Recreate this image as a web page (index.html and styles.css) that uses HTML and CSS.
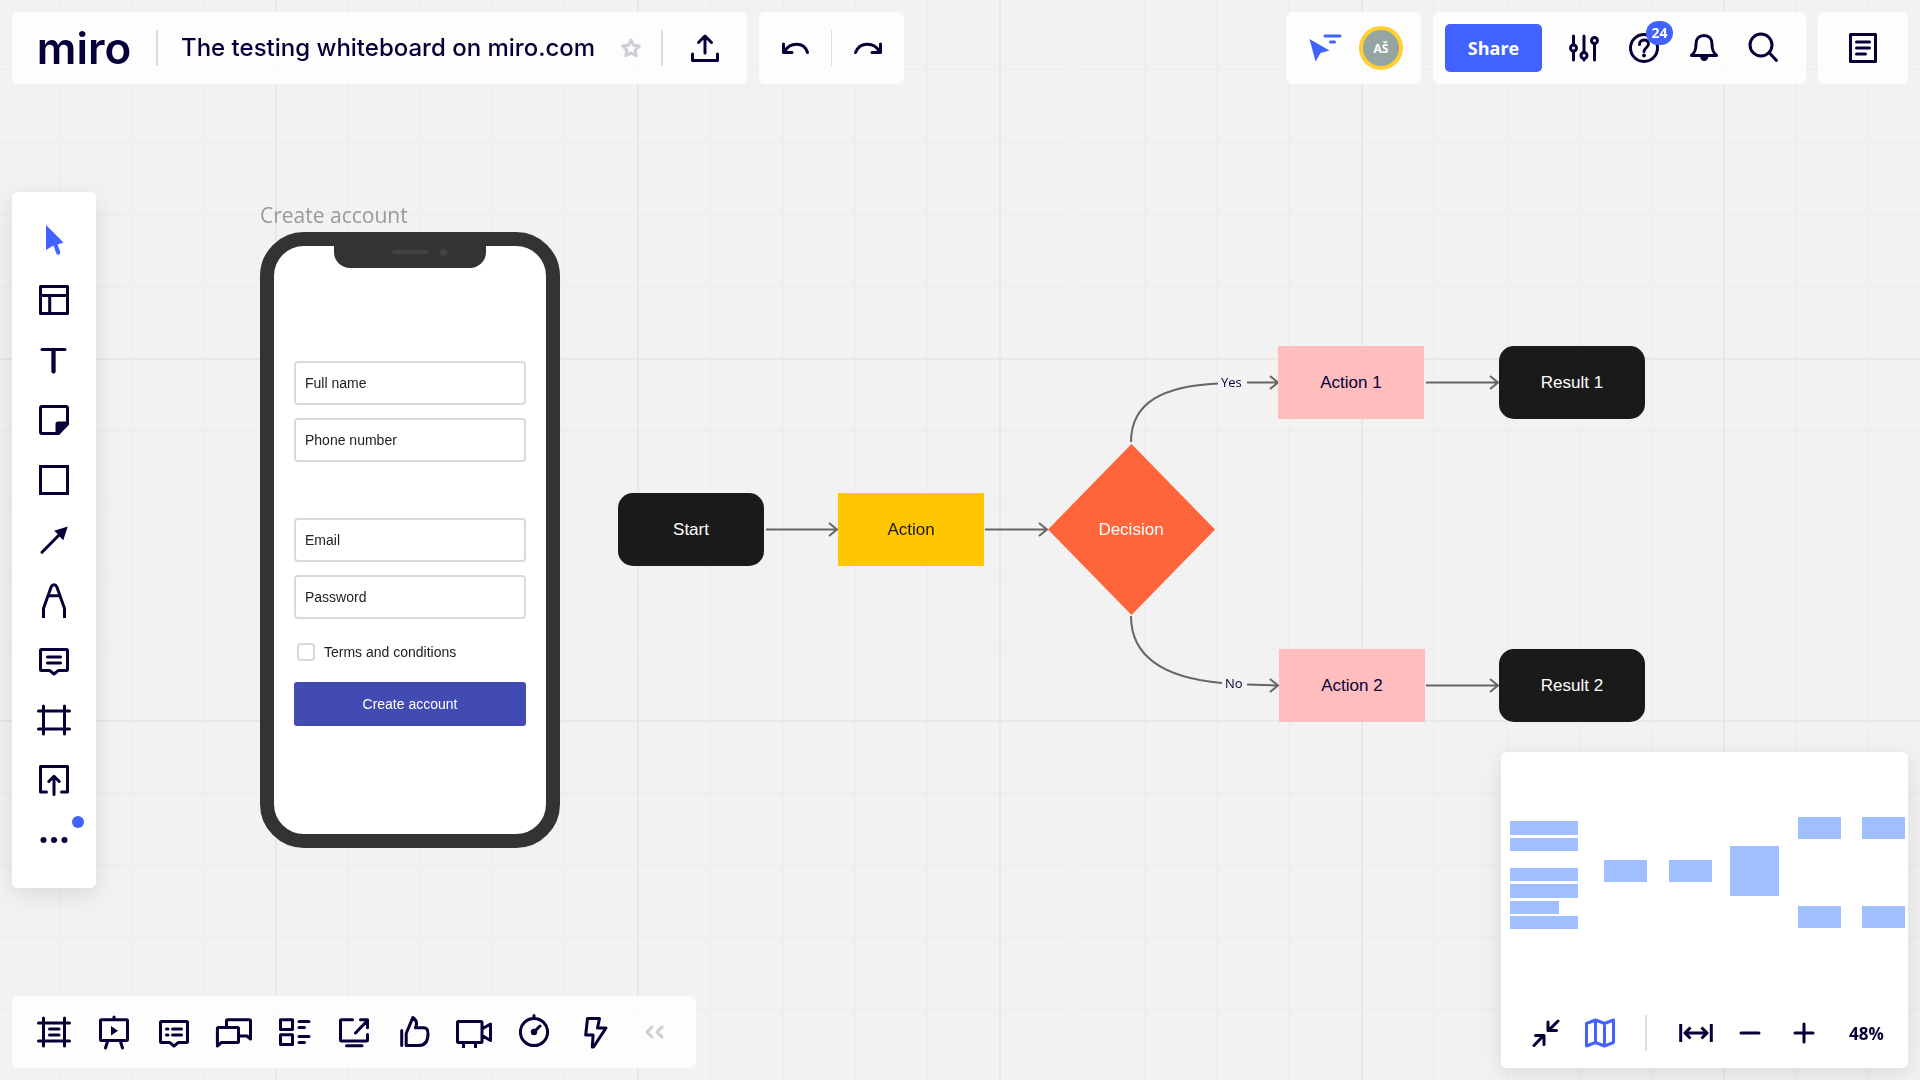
FILE: index.html
```html
<!DOCTYPE html>
<html lang="en">
<head>
<meta charset="utf-8">
<meta name="viewport" content="width=device-width, initial-scale=1">
<title>The testing whiteboard on miro.com</title>
<link rel="stylesheet" href="styles.css">
</head>
<body>
<main class="board" aria-label="Whiteboard">
  <svg class="grid-lines" aria-hidden="true">
    <defs>
      <pattern id="grid" x="275" y="-4" width="362" height="362" patternUnits="userSpaceOnUse">
        <path class="grid-minor" d="M73 0v362M146 0v362M218 0v362M290 0v362M0 73h362M0 146h362M0 218h362M0 290h362"/>
        <path class="grid-major" d="M1 0v362M0 1h362"/>
      </pattern>
    </defs>
    <rect width="100%" height="100%" fill="url(#grid)"/>
  </svg>

  <h2 class="frame-title">Create account</h2>
  <section class="phone" aria-label="Create account screen">
    <div class="notch"><span class="speaker"></span><span class="camera"></span></div>
    <form class="signup">
      <div class="field-group">
        <input class="field" type="text" placeholder="Full name" aria-label="Full name">
        <input class="field" type="tel" placeholder="Phone number" aria-label="Phone number">
      </div>
      <div class="field-group">
        <input class="field" type="email" placeholder="Email" aria-label="Email">
        <input class="field" type="password" placeholder="Password" aria-label="Password">
      </div>
      <label class="terms"><input class="tick" type="checkbox">Terms and conditions</label>
      <button class="create" type="button">Create account</button>
    </form>
  </section>

  <svg class="connectors" aria-hidden="true">
    <path d="M766 529.500H837M829 523l8 6.500-8 6.500M985 529.500h61M1039 523l8 6.500-8 6.500"/>
    <path d="M1131 442C1131 402 1164 386 1218 383.500M1247 382.500h30M1270 376l8 6.500-8 6.500"/>
    <path d="M1131 616C1131 658 1166 678 1222 683M1247 684.500l30 1M1270 679l8 6.500-8 6.500"/>
    <path d="M1426 382.500h71M1490 376l8 6.500-8 6.500M1426 685.500h71M1490 679l8 6.500-8 6.500"/>
    <path class="diamond" d="M1131.500 444L1215 529.500 1131.500 615 1048 529.500z"/>
  </svg>
  <div class="node dark start">Start</div>
  <div class="node yellow action">Action</div>
  <div class="node decision">Decision</div>
  <div class="node pink action-1">Action 1</div>
  <div class="node dark result-1">Result 1</div>
  <div class="node pink action-2">Action 2</div>
  <div class="node dark result-2">Result 2</div>
  <span class="branch yes">Yes</span>
  <span class="branch no">No</span>
</main>

<div class="shell">
  <header class="topbar">
    <div class="bar title-bar">
      <a class="logo" href="#">miro</a>
      <span class="divider"></span>
      <h1 class="board-name">The testing whiteboard on miro.com</h1>
      <button class="star" aria-label="Star this board"><svg class="icon" viewBox="0 0 36 36"><path d="M18 10l2.500 5.300 5.900.7-4.300 4 1.100 5.700-5.200-2.800-5.200 2.800 1.100-5.700-4.300-4 5.900-.7z"/></svg></button>
      <span class="divider"></span>
      <button class="tool" aria-label="Export"><svg class="icon" viewBox="0 0 36 36"><path d="M5.500 24v6.500h25V24M18 23V6M11.500 12.500L18 6l6.500 6.500"/></svg></button>
    </div>
    <div class="bar history-bar">
      <button class="tool" aria-label="Undo"><svg class="icon" viewBox="0 0 36 36"><path d="M6.500 14v8.500H15M7.500 21.500C13 12 27 11.500 30.500 22.500"/></svg></button>
      <span class="divider thin"></span>
      <button class="tool" aria-label="Redo"><svg class="icon" viewBox="0 0 36 36"><path d="M30.500 14v8.500H22M29.500 21.500C24 12 10 11.500 5.500 22.500"/></svg></button>
    </div>
    <div class="bar people-bar">
      <button class="cursors" aria-label="Collaborator cursors"><svg class="icon blue" viewBox="0 0 36 36"><path class="solid" d="M2.500 9L22.500 20.500 13.500 23 8.500 31.500z"/><path d="M18 6h15M23.500 12h4"/></svg></button>
      <button class="avatar" aria-label="Your profile">AŠ</button>
    </div>
    <div class="bar share-bar">
      <button class="share">Share</button>
      <button class="tool" aria-label="Settings"><svg class="icon" viewBox="0 0 36 36"><path d="M7.500 6v8.500M7.500 21.500V30M18 6v16M18 29v1M28.500 14v16"/><circle cx="7.500" cy="18" r="3"/><circle cx="18" cy="25.500" r="3"/><circle cx="28.500" cy="10.500" r="3"/></svg></button>
      <button class="tool" aria-label="Help, 24 new"><svg class="icon" viewBox="0 0 36 36"><circle cx="18" cy="18" r="13.500"/><path d="M13.500 14.500c0-6 9-6 9-.5 0 3.500-4.500 4-4.500 7.500"/><circle class="solid" cx="18" cy="25.500" r="2"/></svg><span class="count">24</span></button>
      <button class="tool" aria-label="Notifications"><svg class="icon" viewBox="0 0 36 36"><path d="M5.500 25.500C9 22.500 10 20 10 14c0-5 3-8.500 8-8.500s8 3.500 8 8.500c0 6 1 8.500 4.500 11.500z"/><path class="solid" d="M14 26.500h8.500c-.7 6-7.800 6-8.500 0z"/></svg></button>
      <button class="tool" aria-label="Search"><svg class="icon" viewBox="0 0 36 36"><circle cx="15" cy="15" r="11"/><path d="M23 22.500L30.500 30.500"/></svg></button>
    </div>
    <div class="bar notes-bar">
      <button class="tool" aria-label="Notes"><svg class="icon" viewBox="0 0 36 36"><path d="M5.500 4.500h25v27h-25zM11.500 12h13M11.500 18h13M11.500 24h9"/></svg></button>
    </div>
  </header>

  <nav class="rail" aria-label="Creation tools">
    <button class="tool" aria-label="Select"><svg class="icon blue" viewBox="0 0 36 36"><path class="fill" d="M10 3v25l7.500-4.500 2.700 7.700a2 2 0 0 0 4-1.400L21.500 22.500l6-2z"/></svg></button>
    <button class="tool" aria-label="Templates"><svg class="icon" viewBox="0 0 36 36"><path d="M4.500 4.500h27v27h-27zM4.500 13.500h27M13.700 13.500v18"/></svg></button>
    <button class="tool" aria-label="Text"><svg class="icon" viewBox="0 0 36 36"><path d="M6 7.500h23"/><path class="thick" d="M17.500 8v21.500"/></svg></button>
    <button class="tool" aria-label="Sticky note"><svg class="icon" viewBox="0 0 36 36"><path d="M6 4.500h24a1.500 1.500 0 0 1 1.500 1.500v16L22.500 31.500H6A1.500 1.500 0 0 1 4.500 30V6A1.500 1.500 0 0 1 6 4.500z"/><path class="fill" d="M22 19.500h10.500L33 22.500 22.500 33l-3-.5V22q0-2.500 2.500-2.500z"/></svg></button>
    <button class="tool" aria-label="Shape"><svg class="icon sharp" viewBox="0 0 36 36"><path d="M4.500 4.500h27v27h-27z"/></svg></button>
    <button class="tool" aria-label="Connection line"><svg class="icon" viewBox="0 0 36 36"><path d="M6 30.300L24 12"/><path class="fill" d="M31.700 4.500L27.300 18.200 23.500 14.500 21.800 12.300 18.200 8.700z"/></svg></button>
    <button class="tool" aria-label="Pen"><svg class="icon flat" viewBox="0 0 36 36"><path d="M7.500 36v-9.500L15.200 4.800Q16.200 2.700 18 2.700t2.800 2.100L28.500 26.500V36M12.500 13.700h11"/></svg></button>
    <button class="tool" aria-label="Comment"><svg class="icon" viewBox="0 0 36 36"><path d="M5.500 7.400h25q1 0 1 1v19q0 1-1 1h-8L18 32l-4.500-3.600h-8q-1 0-1-1v-19q0-1 1-1zM11.500 15h13M11.500 21h13"/></svg></button>
    <button class="tool" aria-label="Frame"><svg class="icon" viewBox="0 0 36 36"><path d="M2.500 9h31M2.500 27h31M7.500 4v28M28.500 4v28"/></svg></button>
    <button class="tool" aria-label="Upload"><svg class="icon" viewBox="0 0 36 36"><path d="M10.500 30h-6V4.500h27V30h-6M18 32.500V14.500M12.800 19.500l5.200-5.200 5.200 5.200"/></svg></button>
    <button class="tool" aria-label="More tools"><svg class="icon" viewBox="0 0 36 36"><circle class="fill" cx="7.500" cy="18" r="3"/><circle class="fill" cx="18" cy="18" r="3"/><circle class="fill" cx="28.500" cy="18" r="3"/></svg><span class="new-dot"></span></button>
  </nav>

  <nav class="bar bottom-bar" aria-label="Collaboration tools">
    <button class="tool" aria-label="Frames"><svg class="icon" viewBox="0 0 36 36"><path d="M2.500 9h31M2.500 27h31M7.500 4v28M28.500 4v28M13.500 15h9.500M13.500 21h9.500"/></svg></button>
    <button class="tool" aria-label="Presentation"><svg class="icon" viewBox="0 0 36 36"><path d="M5.500 5.700h25q1 0 1 1v18.800q0 1-1 1h-25q-1 0-1-1V6.700q0-1 1-1zM18 5V3M11.500 27.500L9.500 34M24.500 27.500l2 6.500"/><path class="fill" d="M15 12v9.500l7-4.700z"/></svg></button>
    <button class="tool" aria-label="Comments"><svg class="icon" viewBox="0 0 36 36"><path d="M5.500 7.400h25q1 0 1 1v19q0 1-1 1h-8L18 32l-4.500-3.600h-8q-1 0-1-1v-19q0-1 1-1zM10.500 15h1.500M16.500 15h9M10.500 21h1.500M16.500 21h9"/></svg></button>
    <button class="tool" aria-label="Chat"><svg class="icon flat" viewBox="0 0 36 36"><path d="M2.500 13.400h19q1 0 1 1v13q0 1-1 1H5.500L1.400 32V14.400q0-1 1.100-1zM10.500 13V6.700q0-1 1-1h22q1 0 1 1V25l-3.500-3H24"/></svg></button>
    <button class="tool" aria-label="Cards"><svg class="icon" viewBox="0 0 36 36"><path d="M4.500 5.700h12v9.800h-12zM4.500 20.700h12v9.800h-12zM23 7.500h10M23 13.500h5.500M23 22.500h10M23 28.500h5.500"/></svg></button>
    <button class="tool" aria-label="Screen sharing"><svg class="icon" viewBox="0 0 36 36"><path d="M16.500 5.700H5.500q-1 0-1 1V26q0 1 1 1h25q1 0 1-1v-5.500M10.500 31.700h15.500M19.500 19L31 7M24.500 5.700h7v8"/></svg></button>
    <button class="tool" aria-label="Voting"><svg class="icon" viewBox="0 0 36 36"><path d="M5.700 16.500v15M10.200 31.500V19.500L16.800 3.500Q22.500 7 19.500 13.800h8q4.500 0 4.500 5.700 0 12-9 12z"/></svg></button>
    <button class="tool" aria-label="Video chat"><svg class="icon flat" viewBox="0 0 36 36"><path d="M2.500 7.400H25q1 0 1 1v19q0 1-1 1H2.500q-1 0-1-1v-19q0-1 1-1zM26 15l8.500-5v16.500L26 21.500M7.500 29v5M19.500 29v5"/></svg></button>
    <button class="tool" aria-label="Timer"><svg class="icon" viewBox="0 0 36 36"><circle cx="18" cy="18" r="13.600"/><path d="M18 4V1.500M18 18l6-6"/><circle class="fill" cx="18" cy="18" r="3.200"/></svg></button>
    <button class="tool" aria-label="Apps"><svg class="icon" viewBox="0 0 36 36"><path d="M11.500 4.500h12l-2 9.500h8.500L17.500 33h-1.200l.8-12H9.700z"/></svg></button>
    <button class="tool" aria-label="Collapse toolbar"><svg class="icon faint" viewBox="0 0 36 36"><path d="M16 13l-5 5 5 5M26 13l-5 5 5 5"/></svg></button>
  </nav>

  <section class="map-panel" aria-label="Map">
    <svg class="minimap" viewBox="0 0 407 246" aria-hidden="true">
      <path d="M9 69h68v14H9zM9 86h68v13H9zM9 116h68v13H9zM9 132h68v14H9zM9 149h49v13H9zM9 164h68v13H9zM103 108h43v22h-43zM168 108h43v22h-43zM229 94h49v50h-49zM297 65h43v22h-43zM361 65h43v22h-43zM297 154h43v22h-43zM361 154h43v22h-43z"/>
    </svg>
    <div class="zoom-bar">
      <button class="zoom-tool" aria-label="Hide controls"><svg class="icon" viewBox="0 0 36 36"><path d="M6 30.500L15 21M7.500 20.500H16v9M30 6L21 15M20 7v8.500h8.500"/></svg></button>
      <button class="zoom-tool" aria-label="Toggle map"><svg class="icon blue" viewBox="0 0 36 36"><path d="M4.500 8.500L13.500 5 22.500 8.500 31.500 5v22.500L22.500 31 13.500 27.500 4.500 31zM13.500 5v22.500M22.500 8.500V31"/></svg></button>
      <span class="divider"></span>
      <button class="zoom-tool" aria-label="Fit to screen"><svg class="icon flat" viewBox="0 0 36 36"><path d="M2.700 9v18M33.300 9v18M7.500 18h21M12.500 12.500L7 18l5.500 5.500M23.500 12.500L29 18l-5.500 5.500"/></svg></button>
      <button class="zoom-tool" aria-label="Zoom out"><svg class="icon" viewBox="0 0 36 36"><path d="M9 18h18"/></svg></button>
      <button class="zoom-tool" aria-label="Zoom in"><svg class="icon" viewBox="0 0 36 36"><path d="M9 18h18M18 9v18"/></svg></button>
      <button class="zoom-level">48%</button>
    </div>
  </section>
</div>
</body>
</html>
```

FILE: styles.css
```css
*, *::before, *::after { box-sizing: border-box; }

:root {
  --ink: #050038;
  --blue: #4262ff;
  --line: #dddde3;
  --ui: "Open Sans", "Noto Sans", sans-serif;
  --shape: "Liberation Sans", Arial, sans-serif;
}

body {
  margin: 0;
  background: #f2f2f2;
  color: var(--ink);
  font-family: var(--ui);
}

button {
  margin: 0;
  padding: 0;
  border: 0;
  background: none;
  color: inherit;
  font: inherit;
  cursor: pointer;
}

/* Canvas */
.board { position: fixed; inset: 0; overflow: hidden; }
.grid-lines, .connectors { position: absolute; inset: 0; width: 100%; height: 100%; }
.grid-minor { fill: none; stroke: #eee; stroke-width: 2; }
.grid-major { fill: none; stroke: #e8e8e8; stroke-width: 2; }
.connectors path { fill: none; stroke: #666; stroke-width: 2; }
.connectors .diamond { fill: #ff653a; stroke: none; }

.frame-title {
  position: absolute;
  left: 260px;
  top: 200px;
  margin: 0;
  color: #999;
  font-size: 21px;
  font-weight: 400;
  line-height: 30px;
}

.phone {
  position: absolute;
  left: 260px;
  top: 232px;
  width: 300px;
  height: 616px;
  border: 14px solid #333;
  border-radius: 44px;
  background: #fff;
}

.notch {
  display: flex;
  align-items: center;
  justify-content: flex-end;
  gap: 12px;
  width: 152px;
  height: 24px;
  margin: -2px auto 0;
  padding: 0 39px 8px 0;
  border-radius: 0 0 16px 16px;
  background: #333;
}
.speaker { width: 36px; height: 4px; border-radius: 2px; background: #434343; }
.camera { width: 7px; height: 7px; border-radius: 50%; background: #434343; }

.signup {
  display: flex;
  flex-direction: column;
  padding: 93px 20px 0;
  font-family: var(--shape);
  font-size: 14px;
}
.field-group { display: flex; flex-direction: column; gap: 13px; }
.field-group + .field-group { margin-top: 56px; }
.field {
  width: 100%;
  height: 44px;
  padding: 0 9px;
  border: 2px solid #d9d9d9;
  border-radius: 4px;
  background: #fff;
  color: #222;
  font: inherit;
}
.field::placeholder { color: #222; opacity: 1; }
.terms {
  display: flex;
  align-items: center;
  gap: 9px;
  margin: 24px 0 21px;
  padding-left: 3px;
  color: #222;
  line-height: 18px;
}
.tick {
  appearance: none;
  width: 18px;
  height: 18px;
  margin: 0;
  border: 2px solid #d9d9d9;
  border-radius: 4px;
  background: #fff;
}
.create { height: 44px; border-radius: 3px; background: #424bb2; color: #fff; }

.node {
  position: absolute;
  display: flex;
  align-items: center;
  justify-content: center;
  width: 146px;
  height: 73px;
  font-family: var(--shape);
  font-size: 17px;
}
.dark { border-radius: 15px; background: #1a1a1a; color: #fff; }
.yellow { background: #ffc602; color: #1a1a1a; }
.pink { background: #ffbdbd; }
.start { left: 618px; top: 493px; }
.action { left: 838px; top: 493px; }
.decision { left: 1058px; top: 493px; color: #fff; }
.action-1 { left: 1278px; top: 346px; }
.result-1 { left: 1499px; top: 346px; }
.action-2 { left: 1279px; top: 649px; }
.result-2 { left: 1499px; top: 649px; }
.branch { position: absolute; font-size: 13px; line-height: 18px; }
.yes { left: 1221px; top: 373px; }
.no { left: 1225px; top: 674px; }

/* Interface over the canvas */
.shell {
  position: relative;
  display: grid;
  grid-template-columns: auto 1fr auto;
  grid-template-rows: auto 1fr auto;
  min-height: 100vh;
  padding: 12px;
}
.topbar { grid-column: 1 / -1; display: flex; gap: 12px; }
.bar {
  display: flex;
  align-items: center;
  height: 72px;
  padding: 0 12px;
  border-radius: 6px;
  background: rgba(255, 255, 255, 0.8);
}
.history-bar { padding: 0 6px; }
.people-bar { gap: 7px; margin-left: auto; padding-right: 18px; }
.notes-bar { padding: 0 15px; }

.divider { flex: none; width: 2px; height: 36px; margin: 0 12px; background: var(--line); }
.thin { width: 1px; margin: 0 6px; }

.tool {
  position: relative;
  display: flex;
  align-items: center;
  justify-content: center;
  flex: none;
  width: 60px;
  height: 60px;
}

.icon {
  display: block;
  width: 36px;
  height: 36px;
  overflow: visible;
  fill: none;
  stroke: var(--ink);
  stroke-width: 3;
  stroke-linecap: round;
  stroke-linejoin: round;
}
.icon .fill { fill: var(--ink); stroke: none; }
.icon .solid { fill: var(--ink); stroke: none; }
.icon .thick { stroke-width: 4.3; }
.icon.flat { stroke-linecap: butt; }
.icon.sharp { stroke-linejoin: miter; }
.icon.blue { stroke: var(--blue); }
.icon.blue .fill, .icon.blue .solid { fill: var(--blue); }
.icon.faint { stroke: #cdccd7; }

.logo {
  width: 120px;
  color: var(--ink);
  font: 600 44px/60px Inter, sans-serif;
  text-align: center;
  text-decoration: none;
}
.board-name {
  margin: 0;
  padding: 0 18px 0 11px;
  font: 500 24px/36px Inter, sans-serif;
  white-space: nowrap;
}
.star { width: 36px; height: 36px; }
.star .icon { stroke: #cdccd7; }

.cursors { width: 54px; display: flex; justify-content: center; }
.avatar {
  width: 44px;
  height: 44px;
  border: 4px solid #ffd02f;
  border-radius: 50%;
  background: #95a5a2;
  color: #fff;
  font-size: 12px;
  font-weight: 700;
}
.share {
  width: 97px;
  height: 48px;
  margin-right: 12px;
  border-radius: 5px;
  background: var(--blue);
  color: #fff;
  font-size: 18px;
  font-weight: 700;
}
.count {
  position: absolute;
  left: 32px;
  top: 3px;
  width: 27px;
  height: 24px;
  border-radius: 12px;
  background: var(--blue);
  color: #fff;
  font-size: 14px;
  font-weight: 700;
  line-height: 23px;
}

.rail, .map-panel {
  border-radius: 6px;
  background: #fff;
  box-shadow: 0 6px 24px rgba(5, 0, 56, 0.1);
}
.rail { grid-row: 2; grid-column: 1; align-self: center; padding: 18px 12px; }
.new-dot {
  position: absolute;
  right: 0;
  top: 6px;
  width: 12px;
  height: 12px;
  border-radius: 50%;
  background: var(--blue);
}
.bottom-bar { grid-row: 3; grid-column: 1 / 3; justify-self: start; }

.map-panel { grid-row: 2 / 4; grid-column: 3; align-self: end; width: 407px; }
.minimap { display: block; width: 100%; fill: #9fbfff; }
.zoom-bar { display: flex; align-items: center; height: 70px; padding: 0 6px 0 18px; }
.zoom-bar .divider { margin: 0 22px 0 18px; }
.zoom-tool { display: flex; justify-content: center; width: 54px; }
.zoom-level { flex: 1; font-size: 17px; font-weight: 700; }
```
